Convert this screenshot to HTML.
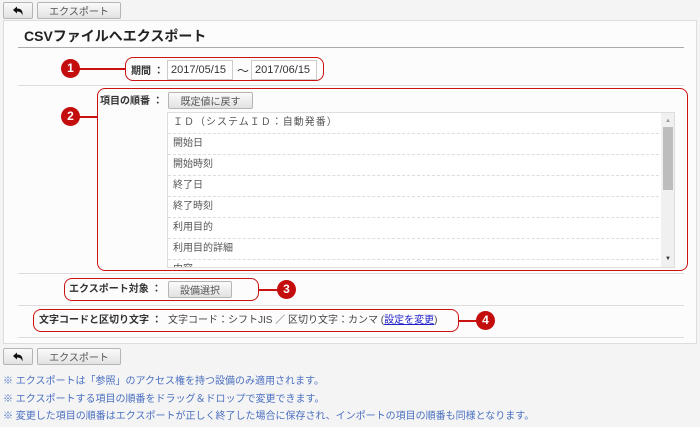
<!DOCTYPE html>
<html><head><meta charset="utf-8"><style>
*{box-sizing:border-box;margin:0;padding:0}
body{width:700px;height:427px;background:#f4f4f4;font-family:"Liberation Sans","Noto Sans CJK JP",sans-serif;font-size:10px;color:#333;position:relative;overflow:hidden}
.a{position:absolute}
.btn{position:absolute;height:17px;border:1px solid #b5b5b5;border-radius:2px;background:linear-gradient(#fafafa,#e2e2e2);font-size:10px;color:#555;display:flex;align-items:center;justify-content:center}
.panel{left:3px;top:20px;width:694px;height:324px;background:#fcfcfc;border:1px solid #ddd}
.hr{position:absolute;height:1px;background:#ddd}
.red{position:absolute;border:1.5px solid #cc1111;border-radius:8px}
.dot{position:absolute;width:19px;height:19px;border-radius:50%;background:#c40d0d;color:#fff;font-weight:bold;font-size:12px;text-align:center;line-height:19px}
.ln{position:absolute;height:1.5px;background:#cc1111}
.inp{position:absolute;height:20px;border:1px solid #ccc;background:#fff;font-size:11px;line-height:18px;padding-left:3px;color:#333}
.lbl{position:absolute;font-weight:bold;font-size:10px;color:#333;line-height:12px}
.row{height:21px;border-bottom:1px dashed #ddd;padding-left:5px;line-height:20px;font-size:10px;color:#555}
.note{position:absolute;left:3px;font-size:10px;color:#4a6fc0;line-height:12px}
</style></head><body>
<div class="btn" style="left:3px;top:2px;width:30px"><svg width="12" height="10" viewBox="0 0 12 10"><path d="M1 4 L5 0.5 L5 2.5 C9 2.5 11 4.5 10.5 9.5 C9.5 6.5 8 5.5 5 5.5 L5 7.5 Z" fill="#111"/></svg></div>
<div class="btn" style="left:37px;top:2px;width:84px">エクスポート</div>
<div class="a panel"></div>
<div class="a" style="left:24px;top:28px;font-size:14px;font-weight:bold;color:#222;line-height:16px">CSVファイルへエクスポート</div>
<div class="hr" style="left:18px;top:47px;width:666px;background:#aaa"></div>
<div class="hr" style="left:18px;top:85px;width:666px"></div>
<div class="hr" style="left:18px;top:273px;width:666px"></div>
<div class="hr" style="left:18px;top:305px;width:666px"></div>
<div class="hr" style="left:18px;top:337px;width:666px"></div>

<div class="lbl" style="left:131px;top:66px">期間 ：</div>
<div class="inp" style="left:167px;top:60px;width:66px">2017/05/15</div>
<div class="a" style="left:237px;top:62px;font-size:12px">～</div>
<div class="inp" style="left:251px;top:60px;width:66px">2017/06/15</div>
<div class="red" style="left:125px;top:57px;width:199px;height:24px"></div>
<div class="ln" style="left:78px;top:68px;width:47px"></div>
<div class="dot" style="left:61px;top:59px">1</div>

<div class="lbl" style="left:100px;top:96px">項目の順番 ：</div>
<div class="btn" style="left:168px;top:92px;width:85px">既定値に戻す</div>
<div class="a" style="left:167px;top:112px;width:508px;height:156px;border:1px solid #ddd;background:#fff;overflow:hidden">
<div class="row" style="letter-spacing:1px">ＩＤ（システムＩＤ：自動発番）</div>
<div class="row">開始日</div><div class="row">開始時刻</div><div class="row">終了日</div>
<div class="row">終了時刻</div><div class="row">利用目的</div><div class="row">利用目的詳細</div><div class="row">内容</div>
<div class="a" style="right:0;top:0;width:13px;height:154px;background:#f0f0f0"></div>
<div class="a" style="right:1px;top:14px;width:10px;height:63px;background:#bdbdbd"></div>
<div class="a" style="right:3px;top:5px;font-size:6px;color:#999">▲</div>
<div class="a" style="right:3px;top:143px;font-size:6px;color:#333">▼</div>
</div>
<div class="red" style="left:97px;top:88px;width:591px;height:183px"></div>
<div class="ln" style="left:78px;top:116px;width:19px"></div>
<div class="dot" style="left:61px;top:107px">2</div>

<div class="lbl" style="left:69px;top:284px">エクスポート対象 ：</div>
<div class="btn" style="left:168px;top:281px;width:64px">設備選択</div>
<div class="red" style="left:64px;top:278px;width:195px;height:23px"></div>
<div class="ln" style="left:259px;top:289px;width:20px"></div>
<div class="dot" style="left:277px;top:280px">3</div>

<div class="lbl" style="left:39px;top:315px">文字コードと区切り文字 ：</div>
<div class="a" style="left:168px;top:315px;font-size:10px;line-height:12px;color:#444;white-space:nowrap">文字コード：シフトJIS ／ 区切り文字：カンマ (<span style="color:#22c;text-decoration:underline">設定を変更</span>)</div>
<div class="red" style="left:33px;top:309px;width:426px;height:23px"></div>
<div class="ln" style="left:459px;top:320px;width:18px"></div>
<div class="dot" style="left:476px;top:311px">4</div>

<div class="btn" style="left:3px;top:348px;width:30px"><svg width="12" height="10" viewBox="0 0 12 10"><path d="M1 4 L5 0.5 L5 2.5 C9 2.5 11 4.5 10.5 9.5 C9.5 6.5 8 5.5 5 5.5 L5 7.5 Z" fill="#111"/></svg></div>
<div class="btn" style="left:37px;top:348px;width:84px">エクスポート</div>
<div class="note" style="top:376px">※ エクスポートは「参照」のアクセス権を持つ設備のみ適用されます。</div>
<div class="note" style="top:394px">※ エクスポートする項目の順番をドラッグ＆ドロップで変更できます。</div>
<div class="note" style="top:411px;white-space:nowrap">※ 変更した項目の順番はエクスポートが正しく終了した場合に保存され、インポートの項目の順番も同様となります。</div>
</body></html>
